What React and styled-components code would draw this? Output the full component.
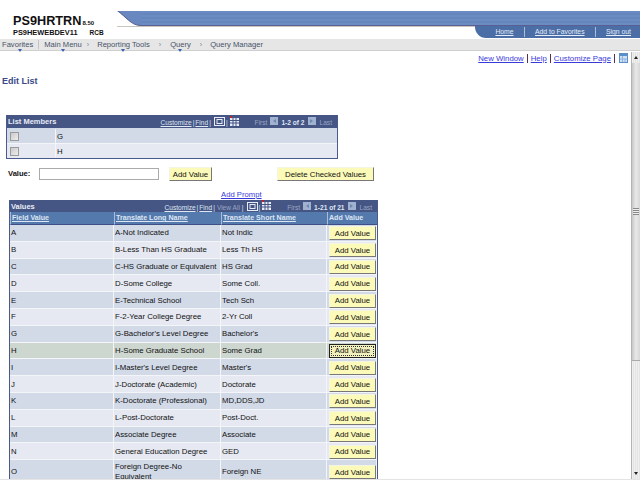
import React from 'react'
import styled, { createGlobalStyle } from 'styled-components'

const Global = createGlobalStyle`
  html, body { margin: 0; padding: 0; background: #fff; overflow: hidden; }
  body { font-family: "Liberation Sans", Arial, sans-serif; font-size: 9px; color: #222; }
`

const Page = styled.div`
  width: 640px;
  height: 480px;
  box-sizing: border-box;
  border-bottom: 1px solid #e4e4e4;
  display: flex;
  overflow: hidden;
`
const Main = styled.div`
  width: 631px;
  display: flex;
  flex-direction: column;
  & > * { flex-shrink: 0; }
`

// header
const Header = styled.div`
  height: 39px;
  display: flex;
`
const Brand = styled.div`
  width: 117px;
  flex-shrink: 0;
  padding: 14px 0 0 13px;
  box-sizing: border-box;
  color: #111;
  font-weight: bold;
`
const Title = styled.div`
  font-size: 12.7px;
  height: 14px;
  line-height: 14px;
  white-space: nowrap;
  small { font-size: 6px; line-height: 0; margin-left: 1px; }
`
const Sub = styled.div`
  font-size: 7.4px;
  height: 9px;
  line-height: 9px;
  white-space: nowrap;
  span { margin-left: 12px; font-size: 6.5px; }
`
const BannerArea = styled.div`
  flex: 1;
  padding-top: 11px;
  min-width: 0;
  margin-right: -9px;
`
const Band = styled.div`
  height: 15px;
  display: flex;
`
const BandFill = styled.div`
  flex: 1;
  border-bottom: 1px solid #5a5f92;
  background: repeating-linear-gradient(180deg, #6b8cc2 0 2px, #6486bd 2px 4px);
`
const TabRow = styled.div`
  display: flex;
  justify-content: flex-end;
  border-top: 1px solid #c9c4bd;
  height: 12px;
`
const Tab = styled.div`
  width: 165px;
  height: 12px;
  margin-top: -1px;
  box-sizing: border-box;
  background: #4b6ea6;
  border-bottom-left-radius: 11px;
  display: flex;
  align-items: center;
  justify-content: flex-end;
  padding-right: 9px;
  font-size: 6.8px;
`
const TabLink = styled.a`
  color: #e4ecf8;
  text-decoration: underline;
  padding: 0 10px 0 10.5px;
  line-height: 10px;
  white-space: nowrap;
  & + & { border-left: 1px solid #a9bcd8; }
  &:last-child { padding-right: 0; }
`

// nav
const NavBar = styled.div`
  height: 11px;
  background: #e6e6e6;
  border-bottom: 1px solid #cfcfcf;
  display: flex;
  align-items: center;
  font-size: 7.6px;
  color: #465268;
  margin-right: -9px;
  padding-left: 2px;
`
const NavItem = styled.span`
  position: relative;
  white-space: nowrap;
  margin-right: ${p => p.$gap}px;
  ${p => p.$divider && 'border-right: 1px solid #c4c4c4; padding-right: 5px;'}
  ${p => p.$menu && `
    &::after {
      content: "";
      position: absolute;
      left: 50%;
      bottom: -3px;
      margin-left: -2px;
      border: 2px solid transparent;
      border-top: 3px solid #3a62b0;
      border-bottom: 0;
    }
  `}
`
const NavSep = styled.span`
  color: #7a8598;
  margin-right: ${p => p.$gap}px;
  font-size: 7px;
`

// body
const PageLinks = styled.div`
  height: 14px;
  display: flex;
  justify-content: flex-end;
  align-items: center;
  padding-right: 3px;
  font-size: 7.8px;
  color: #3333cc;
`
const PageLink = styled.a`
  color: #3a3adb;
  text-decoration: underline;
  white-space: nowrap;
`
const Bar = styled.span`
  width: 1px;
  height: 9px;
  margin: 0 3px;
  background: #5a3050;
`
const PageTitle = styled.h1`
  margin: 11px 0 0 2px;
  height: 39px;
  line-height: 11px;
  font-size: 9px;
  font-weight: bold;
  color: #3a4a86;
`
const Grid = styled.div`
  margin-left: ${p => p.$left}px;
  width: ${p => p.$width}px;
  box-sizing: border-box;
  border: 1px solid #4b5a8c;
  border-top: 0;
  border-bottom-width: ${p => (p.$open ? 0 : 1)}px;
  overflow: hidden;
`
const GridBar = styled.div`
  height: ${p => p.$h}px;
  background: #455584;
  color: #fff;
  display: flex;
  align-items: center;
  padding: 0 5px 0 1px;
  font-size: 6.6px;
  white-space: nowrap;
`
const GridTitle = styled.b`
  font-size: 7.5px;
  color: #e8ecf6;
  margin-right: auto;
`
const Tools = styled.div`
  display: flex;
  align-items: center;
  padding-top: 2px;
`
const BarLink = styled.a`
  color: #dfe6f4;
  text-decoration: underline;
`
const BarText = styled.span`
  color: ${p => p.$dim ? '#9aa6c4' : '#dfe6f4'};
  font-weight: ${p => p.$bold ? 'bold' : 'normal'};
  margin: 0 ${p => p.$right ?? 1}px 0 ${p => p.$left ?? 1}px;
`
const ArrowBtn = styled.span`
  width: 8px;
  height: 8px;
  flex-shrink: 0;
  margin: -3px 2px 0;
  background: #a0b2cf;
  display: inline-flex;
  align-items: center;
  justify-content: center;
  &::after {
    content: "";
    border: 2px solid transparent;
    ${p => p.$next
      ? 'border-left: 3px solid #6f86ad; border-right: 0;'
      : 'border-right: 3px solid #6f86ad; border-left: 0;'}
  }
`
const MemberRow = styled.div`
  height: ${p => p.$h}px;
  background: ${p => (p.$alt ? '#e6e9f1' : '#d2dae8')};
  border-top: 1px solid ${p => (p.$alt ? '#f4f5f9' : '#d2dae8')};
  box-sizing: border-box;
  display: flex;
  align-items: center;
  font-size: 7.8px;
  color: #111;
`
const CheckCell = styled.div`
  width: 49px;
  padding-left: 3px;
  height: 100%;
  box-sizing: border-box;
  display: flex;
  align-items: center;
  border-right: 1px solid #f4f5f9;
  margin-right: 1px;
`
const Check = styled.span`
  width: 7px;
  height: 7px;
  background: linear-gradient(135deg, #c9c9c9, #eee);
  border: 1px solid #9a9a9a;
`
const ValueRow = styled.div`
  height: 31px;
  padding-top: 8px;
  box-sizing: border-box;
  display: flex;
  align-items: flex-start;
`
const ValueLabel = styled.label`
  margin: 2px 0 0 8px;
  width: 31px;
  font-weight: bold;
  font-size: 7.6px;
  color: #111;
`
const ValueInput = styled.div`
  width: 120px;
  height: 12px;
  margin-top: 1px;
  box-sizing: border-box;
  border: 1px solid #aaa;
  background: #fff;
`
const Button = styled.button`
  width: ${p => p.$w}px;
  height: 14px;
  margin-left: ${p => p.$left || 0}px;
  padding: 0;
  box-sizing: border-box;
  font: 7.8px "Liberation Sans", Arial, sans-serif;
  color: #111;
  white-space: nowrap;
  background: #fcfab8;
  border: 1px solid;
  border-color: #f5f5e4 #777 #777 #f5f5e4;
  ${p => p.$focus && `
    background: #f2f0bc;
    border-color: #222;
    outline: 1px dotted #333;
    outline-offset: -3px;
  `}
`
const PromptRow = styled.div`
  height: 10px;
  padding-left: 221px;
  line-height: 10px;
  font-size: 7.7px;
`
const Cols = styled.div`
  display: grid;
  grid-template-columns: 104px 107px 106px 50px;
`
const HeadCell = styled.div`
  height: 12px;
  background: #5479ad;
  border-left: 1px solid #a9bcd8;
  border-bottom: 1px solid #3d4f85;
  padding-left: 1px;
  line-height: 12px;
  font-size: 7.1px;
  font-weight: bold;
  color: #dde6f4;
  text-decoration: ${p => (p.$plain ? 'none' : 'underline')};
  white-space: nowrap;
`
const Cell = styled.div`
  height: ${p => p.$h}px;
  background: ${p => (p.$on ? '#cdd6cf' : p.$alt ? '#e6e9f1' : '#d2dae8')};
  border-bottom: 1px solid #f4f5f9;
  border-right: 1px solid #f4f5f9;
  box-sizing: border-box;
  padding: 1px 0 0 1px;
  display: flex;
  align-items: center;
  font-size: 7.8px;
  line-height: 10px;
  color: #111;
  white-space: pre-line;
`
const ButtonCell = styled(Cell)`
  padding-left: 2px;
`

// scrollbar
const Scroll = styled.div`
  width: 9px;
  margin-top: 52px;
  background: repeating-linear-gradient(90deg, #efefef 0 1px, #e4e4e4 1px 2px);
  border-left: 1px solid #b4b4b4;
  box-sizing: border-box;
  display: flex;
  flex-direction: column;
  align-items: center;
`
const ScrollEnd = styled.div`
  height: 11px;
  width: 100%;
  flex-shrink: 0;
  display: flex;
  align-items: center;
  justify-content: center;
  margin-top: ${p => (p.$down ? 'auto' : 0)};
  &::after {
    content: "";
    border: 2px solid transparent;
    ${p => p.$down
      ? 'border-top: 3px solid #222; border-bottom: 0;'
      : 'border-bottom: 3px solid #222; border-top: 0;'}
  }
`
const Thumb = styled.div`
  width: 100%;
  height: 298px;
  flex-shrink: 0;
  background: linear-gradient(90deg, #c8c8c8, #e9e9e9 50%, #d6d6d6);
  border-bottom: 1px solid #aaa;
  box-sizing: border-box;
  display: flex;
  align-items: center;
  justify-content: center;
`
const Grip = styled.div`
  width: 6px;
  height: 7px;
  background: repeating-linear-gradient(180deg, #888 0 1px, #eee 1px 2px);
`

const CustomizeIcon = () => (
  <svg width="9" height="10" viewBox="0 0 9 10" style={{ marginLeft: 1 }}>
    <rect x="0.5" y="0.5" width="8" height="9" fill="#cfe0f4" stroke="#5b8fca" />
    <rect x="1" y="1" width="7" height="2" fill="#5b8fca" />
    <path d="M1 6H8M3.5 3V9M6 6V9" stroke="#8fb3dc" fill="none" />
  </svg>
)
const ViewIcon = () => (
  <svg width="11" height="9" viewBox="0 0 11 9" style={{ margin: '-2px 0 0 2px' }}>
    <rect x="0.5" y="0.5" width="10" height="8" fill="#455584" stroke="#e8ecf6" />
    <rect x="3" y="2.5" width="5" height="4" fill="none" stroke="#e8ecf6" />
  </svg>
)
const DownloadIcon = () => (
  <svg width="9" height="10" viewBox="0 0 9 10" style={{ margin: '-4px 1px 0' }}>
    <rect x="0" y="2" width="9" height="8" fill="#e8ecf6" />
    <path d="M3 2V10M6 2V10M0 4.5H9M0 7H9" stroke="#455584" />
    <rect x="0" y="0" width="2" height="2" fill="#c8202a" />
  </svg>
)
const BandCurve = () => (
  <svg width="24" height="15" viewBox="0 0 24 15" style={{ display: 'block', flexShrink: 0 }}>
    <path d="M0 0H24V14.5H23C14 14 9 6 0 0Z" fill="#6888bf" />
    <path d="M1 0C9 6 14 14 23 14.5H24" fill="none" stroke="#5a5f92" />
  </svg>
)

const GridTools = ({ viewAll, range }) => (
  <Tools>
    <BarLink>Customize</BarLink>
    <BarText>|</BarText>
    <BarLink>Find</BarLink>
    <BarText>|</BarText>
    {viewAll && <BarText $dim>View All</BarText>}
    {viewAll && <BarText>|</BarText>}
    <ViewIcon />
    <BarText>|</BarText>
    <DownloadIcon />
    <BarText $dim $left={15} $right={1}>First</BarText>
    <ArrowBtn />
    <BarText $bold>{range}</BarText>
    <ArrowBtn $next />
    <BarText $dim $left={2} $right={0}>Last</BarText>
  </Tools>
)

const rows = [
  ['A', 'A-Not Indicated', 'Not Indic'],
  ['B', 'B-Less Than HS Graduate', 'Less Th HS'],
  ['C', 'C-HS Graduate or Equivalent', 'HS Grad'],
  ['D', 'D-Some College', 'Some Coll.'],
  ['E', 'E-Technical School', 'Tech Sch'],
  ['F', 'F-2-Year College Degree', '2-Yr Coll'],
  ['G', "G-Bachelor's Level Degree", "Bachelor's"],
  ['H', 'H-Some Graduate School', 'Some Grad'],
  ['I', "I-Master's Level Degree", "Master's"],
  ['J', 'J-Doctorate (Academic)', 'Doctorate'],
  ['K', 'K-Doctorate (Professional)', 'MD,DDS,JD'],
  ['L', 'L-Post-Doctorate', 'Post-Doct.'],
  ['M', 'Associate Degree', 'Associate'],
  ['N', 'General Education Degree', 'GED'],
  ['O', 'Foreign Degree-No\nEquivalent', 'Foreign NE'],
]

export default function App() {
  return (
    <Page>
      <Global />
      <Main>
        <Header>
          <Brand>
            <Title>PS9HRTRN<small>8.50</small></Title>
            <Sub>PS9HEWEBDEV11<span>RCB</span></Sub>
          </Brand>
          <BannerArea>
            <Band>
              <BandCurve />
              <BandFill />
            </Band>
            <TabRow>
              <Tab>
                <TabLink>Home</TabLink>
                <TabLink>Add to Favorites</TabLink>
                <TabLink>Sign out</TabLink>
              </Tab>
            </TabRow>
          </BannerArea>
        </Header>
        <NavBar>
          <NavItem $menu $divider $gap={5}>Favorites</NavItem>
          <NavItem $menu $gap={5}>Main Menu</NavItem>
          <NavSep $gap={8}>›</NavSep>
          <NavItem $menu $gap={9}>Reporting Tools</NavItem>
          <NavSep $gap={9}>›</NavSep>
          <NavItem $menu $gap={9}>Query</NavItem>
          <NavSep $gap={8}>›</NavSep>
          <NavItem>Query Manager</NavItem>
        </NavBar>
        <PageLinks>
          <PageLink>New Window</PageLink>
          <Bar />
          <PageLink>Help</PageLink>
          <Bar />
          <PageLink>Customize Page</PageLink>
          <Bar />
          <CustomizeIcon />
        </PageLinks>
        <PageTitle>Edit List</PageTitle>
        <Grid $left={6} $width={332}>
          <GridBar $h={13}>
            <GridTitle>List Members</GridTitle>
            <GridTools range="1-2 of 2" />
          </GridBar>
          <MemberRow $h={15}>
            <CheckCell><Check /></CheckCell>G
          </MemberRow>
          <MemberRow $h={15} $alt>
            <CheckCell><Check /></CheckCell>H
          </MemberRow>
        </Grid>
        <ValueRow>
          <ValueLabel>Value:</ValueLabel>
          <ValueInput />
          <Button $w={43} $left={10}>Add Value</Button>
          <Button $w={97} $left={65}>Delete Checked Values</Button>
        </ValueRow>
        <PromptRow><PageLink>Add Prompt</PageLink></PromptRow>
        <Grid $left={9} $width={369} $open>
          <GridBar $h={12}>
            <GridTitle>Values</GridTitle>
            <GridTools viewAll range="1-21 of 21" />
          </GridBar>
          <Cols>
            <HeadCell>Field Value</HeadCell>
            <HeadCell>Translate Long Name</HeadCell>
            <HeadCell>Translate Short Name</HeadCell>
            <HeadCell $plain>Add Value</HeadCell>
            {rows.map((r, i) => {
              const h = i === rows.length - 1 ? 24 : 16.8
              const p = { $h: h, $alt: i % 2 === 1, $on: r[0] === 'H' }
              return (
                <React.Fragment key={r[0]}>
                  <Cell {...p}>{r[0]}</Cell>
                  <Cell {...p}>{r[1]}</Cell>
                  <Cell {...p}>{r[2]}</Cell>
                  <ButtonCell {...p}>
                    <Button $w={47} $focus={r[0] === 'H'}>Add Value</Button>
                  </ButtonCell>
                </React.Fragment>
              )
            })}
          </Cols>
        </Grid>
      </Main>
      <Scroll>
        <ScrollEnd />
        <Thumb><Grip /></Thumb>
        <ScrollEnd $down />
      </Scroll>
    </Page>
  )
}
